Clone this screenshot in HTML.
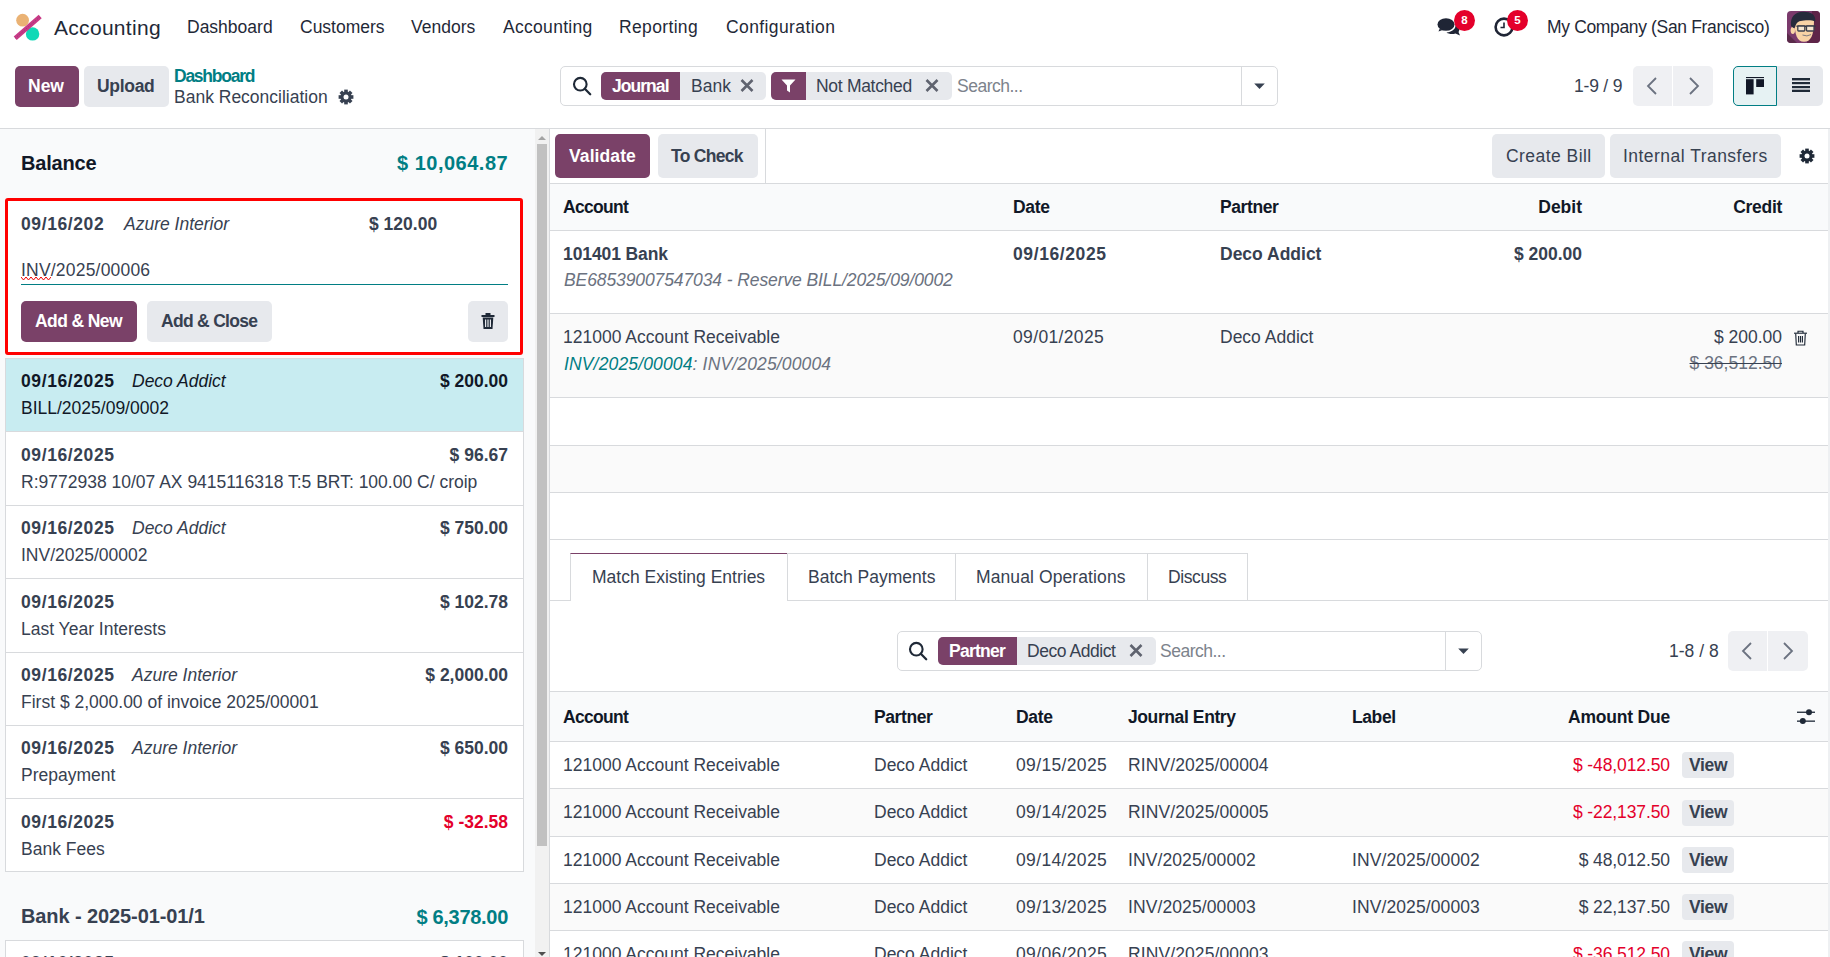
<!DOCTYPE html>
<html><head><meta charset="utf-8">
<style>
*{box-sizing:border-box;margin:0;padding:0}
html,body{width:1830px;height:957px;overflow:hidden;background:#fff}
body{font-family:"Liberation Sans",sans-serif;font-size:17.5px;color:#374151;position:relative}
.a{position:absolute}
.t{position:absolute;white-space:nowrap;line-height:20px}
.b{font-weight:bold}
.i{font-style:italic}
.btn{position:absolute;border-radius:5px;background:#e7e9ed}
.btnp{position:absolute;border-radius:5px;background:#7a4168}
.teal{color:#017e84}
.red{color:#e4002b}
.dk{color:#111827}
</style></head><body>

<!-- NAVBAR -->
<svg class="a" style="left:13px;top:13px" width="30" height="30" viewBox="0 0 30 30">
  <circle cx="9.6" cy="7.2" r="6.4" fill="#eab274"/>
  <circle cx="19.6" cy="20.9" r="6.7" fill="#10d9b7"/>
  <line x1="2.2" y1="25.2" x2="27.2" y2="3.6" stroke="#c93a86" stroke-width="4.6"/>
  <line x1="2.2" y1="25.2" x2="27.2" y2="3.6" stroke="#8d3b78" stroke-width="1" stroke-dasharray="1 1.4"/>
</svg>
<div class="t" style="left:54px;top:17px;font-size:21px;line-height:22px;color:#1f2937;letter-spacing:0.3px">Accounting</div>
<div class="t" style="left:187px;top:17px;color:#1f2937">Dashboard</div>
<div class="t" style="left:300px;top:17px;color:#1f2937">Customers</div>
<div class="t" style="left:411px;top:17px;color:#1f2937">Vendors</div>
<div class="t" style="left:503px;top:17px;color:#1f2937;letter-spacing:0.3px">Accounting</div>
<div class="t" style="left:619px;top:17px;color:#1f2937;letter-spacing:0.35px">Reporting</div>
<div class="t" style="left:726px;top:17px;color:#1f2937;letter-spacing:0.4px">Configuration</div>

<!-- chat icon -->
<svg class="a" style="left:1437px;top:17px" width="26" height="22" viewBox="0 0 26 22">
  <ellipse cx="9" cy="7.5" rx="8.5" ry="6.3" fill="#1f2535"/>
  <path d="M2.5 12 L1.5 14.5 L7 12.5Z" fill="#1f2535"/>
  <path d="M18.5 8.5 C22 9.5 23.5 12 21.5 15 L23 18.5 L18.5 16.5 C15 17.5 11.5 17 9.5 15.5 C14.5 15 18.5 12.5 18.5 8.5Z" fill="#1f2535"/>
</svg>
<div class="a" style="left:1454px;top:10px;width:21px;height:21px;border-radius:50%;background:#e4002b;color:#fff;font-size:11.5px;font-weight:bold;line-height:21px;text-align:center">8</div>
<svg class="a" style="left:1493px;top:16px" width="22" height="22" viewBox="0 0 22 22">
  <circle cx="11" cy="11" r="8.4" fill="none" stroke="#1f2535" stroke-width="2.6"/>
  <path d="M11 6.5 V11.5 H7.5" fill="none" stroke="#1f2535" stroke-width="1.6"/>
</svg>
<div class="a" style="left:1507px;top:10px;width:21px;height:21px;border-radius:50%;background:#e4002b;color:#fff;font-size:11.5px;font-weight:bold;line-height:21px;text-align:center">5</div>
<div class="t" style="left:1547px;top:17px;color:#1f2937;letter-spacing:-0.35px">My Company (San Francisco)</div>
<!-- avatar -->
<svg class="a" style="left:1787px;top:11px" width="33" height="32" viewBox="0 0 33 32">
  <defs><clipPath id="av"><rect width="33" height="32" rx="4"/></clipPath></defs>
  <g clip-path="url(#av)">
  <rect width="33" height="32" fill="#7a3a6c"/>
  <path d="M25 0 H33 V32 H20 Z" fill="#5e2548"/>
  <path d="M0 22 L10 32 H0Z" fill="#5a2a4a"/>
  <ellipse cx="5.8" cy="19.5" rx="2.2" ry="3.4" fill="#f8d3a6"/>
  <path d="M7.6 9 C7.5 24 10 30.5 17 30.8 C23.5 30.8 27 25 27 9 Z" fill="#f8d3a6"/>
  <path d="M4 15 C3 6 8 1 16 0.8 C23 0.5 29 3 28.3 10.5 C26 9.5 22 9 17 9.5 C12 10 9.5 10.5 8 16.5 L6.5 17 Z" fill="#262b3c"/>
  <path d="M9.5 14.6 H28.5 V16 H9.5Z" fill="#2c3140"/>
  <rect x="10.8" y="15" width="7" height="5" rx="0.8" fill="#f5e6d0" stroke="#3b3f4c" stroke-width="1.3"/>
  <rect x="19.5" y="15" width="7.5" height="5" rx="0.8" fill="#f5e6d0" stroke="#3b3f4c" stroke-width="1.3"/>
  <path d="M15.5 24 Q20 26 24 23.6" fill="none" stroke="#7d7a80" stroke-width="1"/>
  </g>
</svg>

<!-- CONTROL PANEL -->
<div class="btnp" style="left:15px;top:66px;width:64px;height:41px"></div>
<div class="t b" style="left:28px;top:76px;color:#fff">New</div>
<div class="btn" style="left:84px;top:66px;width:85px;height:41px"></div>
<div class="t b" style="left:97px;top:76px;letter-spacing:-0.3px">Upload</div>
<div class="t b teal" style="left:174px;top:66px;letter-spacing:-1.25px">Dashboard</div>
<div class="t" style="left:174px;top:87px">Bank Reconciliation</div>
<svg class="a" style="left:337.5px;top:88.5px" width="16" height="16" viewBox="0 0 16 16"><g fill="#374151"><circle cx="8" cy="8" r="5.6"/><rect x="6.2" y="0.6" width="3.6" height="14.8"/><rect x="6.2" y="0.6" width="3.6" height="14.8" transform="rotate(45 8 8)"/><rect x="6.2" y="0.6" width="3.6" height="14.8" transform="rotate(90 8 8)"/><rect x="6.2" y="0.6" width="3.6" height="14.8" transform="rotate(135 8 8)"/></g><circle cx="8" cy="8" r="2.5" fill="#fff"/></svg>

<div class="a" style="left:560px;top:66px;width:718px;height:40px;border:1px solid #d8dadd;border-radius:5px"></div>
<div class="a" style="left:1241px;top:67px;width:1px;height:38px;background:#d8dadd"></div>
<svg class="a" style="left:1253px;top:81px" width="13" height="9" viewBox="0 0 13 9"><path d="M1.2 2.4 H11.8 L6.5 7.9Z" fill="#374151"/></svg>
<svg class="a" style="left:572px;top:76px" width="20" height="20" viewBox="0 0 20 20"><circle cx="8.3" cy="8.2" r="6.3" fill="none" stroke="#1f2937" stroke-width="2.1"/><path d="M12.8 12.8 L18.2 18.2" stroke="#1f2937" stroke-width="2.3" stroke-linecap="round"/></svg>
<div class="a" style="left:601px;top:72px;width:165px;height:28px;border-radius:5px;background:#e7e9ed"></div>
<div class="a" style="left:601px;top:72px;width:79px;height:28px;border-radius:5px 0 0 5px;background:#7a4168"></div>
<div class="t b" style="left:612px;top:76px;color:#fff;letter-spacing:-0.95px">Journal</div>
<div class="t" style="left:691px;top:76px">Bank</div>
<svg class="a" style="left:740px;top:79px" width="14" height="13" viewBox="0 0 14 13"><path d="M1.5 1 L12.5 12 M12.5 1 L1.5 12" stroke="#5f636f" stroke-width="2.6"/></svg>
<div class="a" style="left:771px;top:72px;width:181px;height:28px;border-radius:5px;background:#e7e9ed"></div>
<div class="a" style="left:771px;top:72px;width:35px;height:28px;border-radius:5px 0 0 5px;background:#7a4168"></div>
<svg class="a" style="left:781px;top:79px" width="15" height="14" viewBox="0 0 15 14"><path d="M0.5 0.5 H14.5 L9 6.5 V13.5 L6 11.5 V6.5Z" fill="#fff"/></svg>
<div class="t" style="left:816px;top:76px;letter-spacing:-0.3px">Not Matched</div>
<svg class="a" style="left:925px;top:79px" width="14" height="13" viewBox="0 0 14 13"><path d="M1.5 1 L12.5 12 M12.5 1 L1.5 12" stroke="#5f636f" stroke-width="2.6"/></svg>
<div class="t" style="left:957px;top:76px;color:#7d838c;letter-spacing:-0.5px">Search...</div>

<div class="t" style="left:1574px;top:76px;letter-spacing:-0.2px">1-9 / 9</div>
<div class="a" style="left:1633px;top:66px;width:80px;height:40px;border-radius:5px;background:#eff0f3"></div>
<div class="a" style="left:1672px;top:66px;width:1px;height:40px;background:#fff"></div>
<svg class="a" style="left:1645px;top:76px" width="14" height="20" viewBox="0 0 14 20"><path d="M11 2 L3 10 L11 18" fill="none" stroke="#6b7280" stroke-width="1.8"/></svg>
<svg class="a" style="left:1687px;top:76px" width="14" height="20" viewBox="0 0 14 20"><path d="M3 2 L11 10 L3 18" fill="none" stroke="#6b7280" stroke-width="1.8"/></svg>
<div class="a" style="left:1733px;top:66px;width:90px;height:40px;border-radius:5px;background:#e7e9ed"></div>
<div class="a" style="left:1733px;top:66px;width:44px;height:40px;border-radius:5px 0 0 5px;background:#e6f2f3;border:1px solid #017e84"></div>
<svg class="a" style="left:1746px;top:77px" width="19" height="18" viewBox="0 0 19 18"><rect x="0" y="0" width="18" height="1.1" fill="#111827"/><rect x="0" y="2.2" width="7.6" height="15.2" fill="#111827"/><rect x="10.2" y="2.2" width="7.8" height="7.8" fill="#111827"/></svg>
<svg class="a" style="left:1792px;top:78px" width="18" height="14" viewBox="0 0 18 14"><g fill="#1f2937"><rect x="0" y="0" width="18" height="2.4"/><rect x="0" y="4" width="18" height="2.2"/><rect x="0" y="8" width="18" height="2.2"/><rect x="0" y="11.7" width="18" height="2.3"/></g></svg>

<div class="a" style="left:0;top:128px;width:1830px;height:1px;background:#d8dadd"></div>


<!-- LEFT PANEL -->
<div class="a" style="left:0;top:129px;width:535px;height:828px;background:#f9fafb"></div>
<div class="a" style="left:535px;top:129px;width:14px;height:828px;background:#f1f1f1"></div>
<div class="a" style="left:537px;top:144px;width:10px;height:702px;background:#c1c1c1"></div>
<svg class="a" style="left:537px;top:134px" width="10" height="7" viewBox="0 0 10 7"><path d="M1 6 L5 2 L9 6Z" fill="#a3a3a3"/></svg>
<svg class="a" style="left:537px;top:951px" width="10" height="7" viewBox="0 0 10 7"><path d="M1 1 L5 5 L9 1Z" fill="#505050"/></svg>
<div class="a" style="left:549px;top:129px;width:1px;height:828px;background:#d8dadd"></div>

<div class="t b dk" style="left:21px;top:152px;font-size:20px;line-height:22px;letter-spacing:-0.2px">Balance</div>
<div class="t b teal" style="left:397px;top:152px;font-size:20px;line-height:22px;letter-spacing:0.5px">$ 10,064.87</div>

<div class="a" style="left:5px;top:198px;width:518px;height:157px;border:3px solid #ff0000;border-radius:3px;background:#fff"></div>
<div class="t b" style="left:21px;top:214px;letter-spacing:0.6px">09/16/202</div>
<div class="t i" style="left:124px;top:214px">Azure Interior</div>
<div class="t b" style="left:369px;top:214px">$ 120.00</div>
<div class="t" style="left:21px;top:260px;letter-spacing:0.2px">INV/2025/00006</div>
<svg class="a" style="left:21px;top:276px" width="30" height="5" viewBox="0 0 30 5"><path d="M0 1 L2.5 4 L5 1 L7.5 4 L10 1 L12.5 4 L15 1 L17.5 4 L20 1 L22.5 4 L25 1 L27.5 4 L30 1" fill="none" stroke="#e00" stroke-width="1"/></svg>
<div class="a" style="left:21px;top:284px;width:487px;height:1px;background:#017e84"></div>
<div class="btnp" style="left:21px;top:301px;width:116px;height:41px"></div>
<div class="t b" style="left:35px;top:311px;color:#fff;letter-spacing:-0.6px">Add &amp; New</div>
<div class="btn" style="left:147px;top:301px;width:125px;height:41px"></div>
<div class="t b" style="left:161px;top:311px;letter-spacing:-0.7px">Add &amp; Close</div>
<div class="btn" style="left:468px;top:301px;width:40px;height:41px"></div>
<svg class="a" style="left:481px;top:313px" width="14" height="17" viewBox="0 0 14 17"><g fill="#1f2937"><rect x="0.5" y="2" width="13" height="2"/><rect x="4.5" y="0" width="5" height="2.5"/><path d="M1.7 4.5 H12.3 L11.5 16 H2.5Z"/></g><g fill="#e7e9ed"><rect x="4" y="6.5" width="1.2" height="7.5"/><rect x="6.4" y="6.5" width="1.2" height="7.5"/><rect x="8.8" y="6.5" width="1.2" height="7.5"/></g></svg>

<div class="a" style="left:5px;top:358px;width:519px;height:514px;border:1px solid #d8dadd;background:#fff"></div>
<div class="a" style="left:6px;top:359px;width:517px;height:72px;background:#c8ecf1"></div>
<div class="t b" style="left:21px;top:371.4px;letter-spacing:0.6px;color:#111827;">09/16/2025</div>
<div class="t i" style="left:132px;top:371.4px;color:#111827;">Deco Addict</div>
<div class="t b" style="right:1322px;top:371.4px;color:#111827;">$ 200.00</div>
<div class="t" style="left:21px;top:398.4px;color:#111827;">BILL/2025/09/0002</div>
<div class="a" style="left:6px;top:431.4px;width:517px;height:1px;background:#d8dadd"></div>
<div class="t b" style="left:21px;top:444.8px;letter-spacing:0.6px;">09/16/2025</div>
<div class="t b" style="right:1322px;top:444.8px;">$ 96.67</div>
<div class="t" style="left:21px;top:471.8px;">R:9772938 10/07 AX 9415116318 T:5 BRT: 100.00 C/ croip</div>
<div class="a" style="left:6px;top:504.8px;width:517px;height:1px;background:#d8dadd"></div>
<div class="t b" style="left:21px;top:518.2px;letter-spacing:0.6px;">09/16/2025</div>
<div class="t i" style="left:132px;top:518.2px;">Deco Addict</div>
<div class="t b" style="right:1322px;top:518.2px;">$ 750.00</div>
<div class="t" style="left:21px;top:545.2px;">INV/2025/00002</div>
<div class="a" style="left:6px;top:578.2px;width:517px;height:1px;background:#d8dadd"></div>
<div class="t b" style="left:21px;top:591.6px;letter-spacing:0.6px;">09/16/2025</div>
<div class="t b" style="right:1322px;top:591.6px;">$ 102.78</div>
<div class="t" style="left:21px;top:618.6px;">Last Year Interests</div>
<div class="a" style="left:6px;top:651.6px;width:517px;height:1px;background:#d8dadd"></div>
<div class="t b" style="left:21px;top:665.0px;letter-spacing:0.6px;">09/16/2025</div>
<div class="t i" style="left:132px;top:665.0px;">Azure Interior</div>
<div class="t b" style="right:1322px;top:665.0px;">$ 2,000.00</div>
<div class="t" style="left:21px;top:692.0px;">First $ 2,000.00 of invoice 2025/00001</div>
<div class="a" style="left:6px;top:725.0px;width:517px;height:1px;background:#d8dadd"></div>
<div class="t b" style="left:21px;top:738.4px;letter-spacing:0.6px;">09/16/2025</div>
<div class="t i" style="left:132px;top:738.4px;">Azure Interior</div>
<div class="t b" style="right:1322px;top:738.4px;">$ 650.00</div>
<div class="t" style="left:21px;top:765.4px;">Prepayment</div>
<div class="a" style="left:6px;top:798.4px;width:517px;height:1px;background:#d8dadd"></div>
<div class="t b" style="left:21px;top:811.8px;letter-spacing:0.6px;">09/16/2025</div>
<div class="t b red" style="right:1322px;top:811.8px;">$ -32.58</div>
<div class="t" style="left:21px;top:838.8px;">Bank Fees</div>

<div class="t b" style="left:21px;top:905px;font-size:20px;line-height:22px;letter-spacing:-0.1px">Bank - 2025-01-01/1</div>
<div class="t b teal" style="right:1322px;top:906px;font-size:20px;line-height:22px;letter-spacing:-0.3px">$ 6,378.00</div>
<div class="a" style="left:5px;top:940px;width:519px;height:30px;border:1px solid #d8dadd;background:#fff"></div>
<div class="t b" style="left:21px;top:953px;letter-spacing:0.6px">09/16/2025</div>
<div class="t b" style="right:1322px;top:953px">$ 100.00</div>

<!-- RIGHT PANEL TOP -->
<div class="btnp" style="left:555px;top:134px;width:95px;height:44px"></div>
<div class="t b" style="left:569px;top:146px;color:#fff;letter-spacing:0.1px">Validate</div>
<div class="btn" style="left:658px;top:134px;width:100px;height:44px"></div>
<div class="t b" style="left:671px;top:146px;letter-spacing:-0.7px">To Check</div>
<div class="a" style="left:765px;top:129px;width:1px;height:54px;background:#d8dadd"></div>
<div class="btn" style="left:1492px;top:134px;width:113px;height:44px"></div>
<div class="t" style="left:1506px;top:146px;letter-spacing:0.45px">Create Bill</div>
<div class="btn" style="left:1610px;top:134px;width:171px;height:44px"></div>
<div class="t" style="left:1623px;top:146px;letter-spacing:0.47px">Internal Transfers</div>
<svg class="a" style="left:1799px;top:148px" width="16" height="16" viewBox="0 0 16 16"><g fill="#1f2937"><circle cx="8" cy="8" r="5.6"/><rect x="6.2" y="0.6" width="3.6" height="14.8"/><rect x="6.2" y="0.6" width="3.6" height="14.8" transform="rotate(45 8 8)"/><rect x="6.2" y="0.6" width="3.6" height="14.8" transform="rotate(90 8 8)"/><rect x="6.2" y="0.6" width="3.6" height="14.8" transform="rotate(135 8 8)"/></g><circle cx="8" cy="8" r="2.5" fill="#fff"/></svg>
<div class="a" style="left:1828px;top:129px;width:2px;height:828px;background:#eef0f2"></div>

<div class="a" style="left:550px;top:183px;width:1278px;height:48px;background:#f9fafb;border-top:1px solid #d8dadd;border-bottom:1px solid #d8dadd"></div>
<div class="t b dk" style="left:563px;top:197px;letter-spacing:-0.7px">Account</div>
<div class="t b dk" style="left:1013px;top:197px;letter-spacing:-0.3px">Date</div>
<div class="t b dk" style="left:1220px;top:197px;letter-spacing:-0.4px">Partner</div>
<div class="t b dk" style="right:248px;top:197px;letter-spacing:0px">Debit</div>
<div class="t b dk" style="right:48px;top:197px;letter-spacing:-0.3px">Credit</div>

<div class="t b" style="left:563px;top:244px;letter-spacing:-0.1px">101401 Bank</div>
<div class="t i" style="left:564px;top:270px;color:#6b7280;letter-spacing:-0.1px">BE68539007547034 - Reserve BILL/2025/09/0002</div>
<div class="t b" style="left:1013px;top:244px;letter-spacing:0.6px">09/16/2025</div>
<div class="t b" style="left:1220px;top:244px">Deco Addict</div>
<div class="t b" style="right:248px;top:244px">$ 200.00</div>
<div class="a" style="left:550px;top:313px;width:1278px;height:1px;background:#d8dadd"></div>

<div class="a" style="left:550px;top:314px;width:1278px;height:83px;background:#fafafa"></div>
<div class="t" style="left:563px;top:327px">121000 Account Receivable</div>
<div class="t i" style="left:564px;top:354px;color:#6b7280;letter-spacing:0.15px"><span class="teal">INV/2025/00004</span>: INV/2025/00004</div>
<div class="t" style="left:1013px;top:327px;letter-spacing:0.35px">09/01/2025</div>
<div class="t" style="left:1220px;top:327px">Deco Addict</div>
<div class="t" style="right:48px;top:327px">$ 200.00</div>
<div class="t" style="right:48px;top:353px;color:#6b7280;text-decoration:line-through;text-decoration-color:#374151">$ 36,512.50</div>
<svg class="a" style="left:1793px;top:330px" width="15" height="16" viewBox="0 0 15 16"><g fill="none" stroke="#1f2937" stroke-width="1.15"><path d="M1 3.2 H14"/><path d="M5 3 V1.2 H10 V3"/><path d="M2.7 3.5 L3.3 15 H11.7 L12.3 3.5"/><path d="M5.6 6 V12.5 M7.5 6 V12.5 M9.4 6 V12.5"/></g></svg>
<div class="a" style="left:550px;top:397px;width:1278px;height:1px;background:#d8dadd"></div>
<div class="a" style="left:550px;top:445px;width:1278px;height:48.3px;background:#fafafa;border-top:1px solid #d8dadd;border-bottom:1px solid #d8dadd"></div>
<div class="a" style="left:550px;top:539px;width:1278px;height:1px;background:#d8dadd"></div>

<!-- TABS -->
<div class="a" style="left:550px;top:600px;width:1278px;height:1px;background:#d8dadd"></div>
<div class="a" style="left:570px;top:553px;width:218px;height:48px;background:#fff;border:1px solid #d8dadd;border-top:1px solid #7a4168;border-bottom:none"></div>
<div class="t" style="left:592px;top:567px">Match Existing Entries</div>
<div class="a" style="left:787px;top:553px;width:169px;height:47px;border:1px solid #d8dadd;border-bottom:none"></div>
<div class="t" style="left:808px;top:567px">Batch Payments</div>
<div class="a" style="left:955px;top:553px;width:193px;height:47px;border:1px solid #d8dadd;border-bottom:none"></div>
<div class="t" style="left:976px;top:567px;letter-spacing:0.1px">Manual Operations</div>
<div class="a" style="left:1147px;top:553px;width:101px;height:47px;border:1px solid #d8dadd;border-bottom:none"></div>
<div class="t" style="left:1168px;top:567px;letter-spacing:-0.4px">Discuss</div>

<!-- lower search -->
<div class="a" style="left:897px;top:631px;width:585px;height:40px;border:1px solid #d8dadd;border-radius:5px"></div>
<div class="a" style="left:1445px;top:632px;width:1px;height:38px;background:#d8dadd"></div>
<svg class="a" style="left:1457px;top:646px" width="13" height="9" viewBox="0 0 13 9"><path d="M1.2 2.4 H11.8 L6.5 7.9Z" fill="#374151"/></svg>
<svg class="a" style="left:908px;top:641px" width="20" height="20" viewBox="0 0 20 20"><circle cx="8.3" cy="8.2" r="6.3" fill="none" stroke="#1f2937" stroke-width="2.1"/><path d="M12.8 12.8 L18.2 18.2" stroke="#1f2937" stroke-width="2.3" stroke-linecap="round"/></svg>
<div class="a" style="left:938px;top:637px;width:218px;height:28px;border-radius:5px;background:#e7e9ed"></div>
<div class="a" style="left:938px;top:637px;width:79px;height:28px;border-radius:5px 0 0 5px;background:#7a4168"></div>
<div class="t b" style="left:949px;top:641px;color:#fff;letter-spacing:-0.75px">Partner</div>
<div class="t" style="left:1027px;top:641px;letter-spacing:-0.45px">Deco Addict</div>
<svg class="a" style="left:1129px;top:644px" width="14" height="13" viewBox="0 0 14 13"><path d="M1.5 1 L12.5 12 M12.5 1 L1.5 12" stroke="#5f636f" stroke-width="2.6"/></svg>
<div class="t" style="left:1160px;top:641px;color:#7d838c;letter-spacing:-0.5px">Search...</div>

<div class="t" style="left:1669px;top:641px">1-8 / 8</div>
<div class="a" style="left:1728px;top:631px;width:80px;height:40px;border-radius:5px;background:#eff0f3"></div>
<div class="a" style="left:1767px;top:631px;width:1px;height:40px;background:#fff"></div>
<svg class="a" style="left:1740px;top:641px" width="14" height="20" viewBox="0 0 14 20"><path d="M11 2 L3 10 L11 18" fill="none" stroke="#6b7280" stroke-width="1.8"/></svg>
<svg class="a" style="left:1781px;top:641px" width="14" height="20" viewBox="0 0 14 20"><path d="M3 2 L11 10 L3 18" fill="none" stroke="#6b7280" stroke-width="1.8"/></svg>

<!-- lower table -->
<div class="a" style="left:550px;top:691px;width:1278px;height:51px;background:#f9fafb;border-top:1px solid #d8dadd;border-bottom:1px solid #d8dadd"></div>
<div class="t b dk" style="left:563px;top:707px;letter-spacing:-0.7px">Account</div>
<div class="t b dk" style="left:874px;top:707px;letter-spacing:-0.4px">Partner</div>
<div class="t b dk" style="left:1016px;top:707px;letter-spacing:-0.3px">Date</div>
<div class="t b dk" style="left:1128px;top:707px;letter-spacing:-0.4px">Journal Entry</div>
<div class="t b dk" style="left:1352px;top:707px;letter-spacing:-0.4px">Label</div>
<div class="t b dk" style="right:160px;top:707px;letter-spacing:-0.2px">Amount Due</div>
<svg class="a" style="left:1796px;top:708px" width="20" height="18" viewBox="0 0 20 18"><g fill="#1f2937"><rect x="1" y="3.6" width="18" height="1.3"/><rect x="1" y="12.5" width="18" height="1.3"/><circle cx="13" cy="4.3" r="3"/><circle cx="6.8" cy="13.1" r="3"/></g></svg>
<div class="a" style="left:550px;top:788.4px;width:1278px;height:1px;background:#d8dadd"></div>
<div class="t" style="left:563px;top:755.1px">121000 Account Receivable</div>
<div class="t" style="left:874px;top:755.1px">Deco Addict</div>
<div class="t" style="left:1016px;top:755.1px;letter-spacing:0.35px">09/15/2025</div>
<div class="t" style="left:1128px;top:755.1px;letter-spacing:0.1px">RINV/2025/00004</div>
<div class="t red" style="right:160px;top:755.1px;letter-spacing:-0.1px">$ -48,012.50</div>
<div class="btn" style="left:1682px;top:752.2px;width:52px;height:26px;border-radius:4px"></div>
<div class="t b" style="left:1689px;top:755.1px;letter-spacing:-0.3px">View</div>
<div class="a" style="left:550px;top:788.9px;width:1278px;height:47.3px;background:#fafafa"></div>
<div class="a" style="left:550px;top:835.7px;width:1278px;height:1px;background:#d8dadd"></div>
<div class="t" style="left:563px;top:802.4px">121000 Account Receivable</div>
<div class="t" style="left:874px;top:802.4px">Deco Addict</div>
<div class="t" style="left:1016px;top:802.4px;letter-spacing:0.35px">09/14/2025</div>
<div class="t" style="left:1128px;top:802.4px;letter-spacing:0.1px">RINV/2025/00005</div>
<div class="t red" style="right:160px;top:802.4px;letter-spacing:-0.1px">$ -22,137.50</div>
<div class="btn" style="left:1682px;top:799.5px;width:52px;height:26px;border-radius:4px"></div>
<div class="t b" style="left:1689px;top:802.4px;letter-spacing:-0.3px">View</div>
<div class="a" style="left:550px;top:883.0px;width:1278px;height:1px;background:#d8dadd"></div>
<div class="t" style="left:563px;top:849.7px">121000 Account Receivable</div>
<div class="t" style="left:874px;top:849.7px">Deco Addict</div>
<div class="t" style="left:1016px;top:849.7px;letter-spacing:0.35px">09/14/2025</div>
<div class="t" style="left:1128px;top:849.7px;letter-spacing:0.1px">INV/2025/00002</div>
<div class="t" style="left:1352px;top:849.7px;letter-spacing:0.1px">INV/2025/00002</div>
<div class="t" style="right:160px;top:849.7px;letter-spacing:-0.1px">$ 48,012.50</div>
<div class="btn" style="left:1682px;top:846.8px;width:52px;height:26px;border-radius:4px"></div>
<div class="t b" style="left:1689px;top:849.7px;letter-spacing:-0.3px">View</div>
<div class="a" style="left:550px;top:883.5px;width:1278px;height:47.3px;background:#fafafa"></div>
<div class="a" style="left:550px;top:930.3px;width:1278px;height:1px;background:#d8dadd"></div>
<div class="t" style="left:563px;top:897.0px">121000 Account Receivable</div>
<div class="t" style="left:874px;top:897.0px">Deco Addict</div>
<div class="t" style="left:1016px;top:897.0px;letter-spacing:0.35px">09/13/2025</div>
<div class="t" style="left:1128px;top:897.0px;letter-spacing:0.1px">INV/2025/00003</div>
<div class="t" style="left:1352px;top:897.0px;letter-spacing:0.1px">INV/2025/00003</div>
<div class="t" style="right:160px;top:897.0px;letter-spacing:-0.1px">$ 22,137.50</div>
<div class="btn" style="left:1682px;top:894.1px;width:52px;height:26px;border-radius:4px"></div>
<div class="t b" style="left:1689px;top:897.0px;letter-spacing:-0.3px">View</div>
<div class="a" style="left:550px;top:977.6px;width:1278px;height:1px;background:#d8dadd"></div>
<div class="t" style="left:563px;top:944.3px">121000 Account Receivable</div>
<div class="t" style="left:874px;top:944.3px">Deco Addict</div>
<div class="t" style="left:1016px;top:944.3px;letter-spacing:0.35px">09/06/2025</div>
<div class="t" style="left:1128px;top:944.3px;letter-spacing:0.1px">RINV/2025/00003</div>
<div class="t red" style="right:160px;top:944.3px;letter-spacing:-0.1px">$ -36,512.50</div>
<div class="btn" style="left:1682px;top:941.4px;width:52px;height:26px;border-radius:4px"></div>
<div class="t b" style="left:1689px;top:944.3px;letter-spacing:-0.3px">View</div>
</body></html>
